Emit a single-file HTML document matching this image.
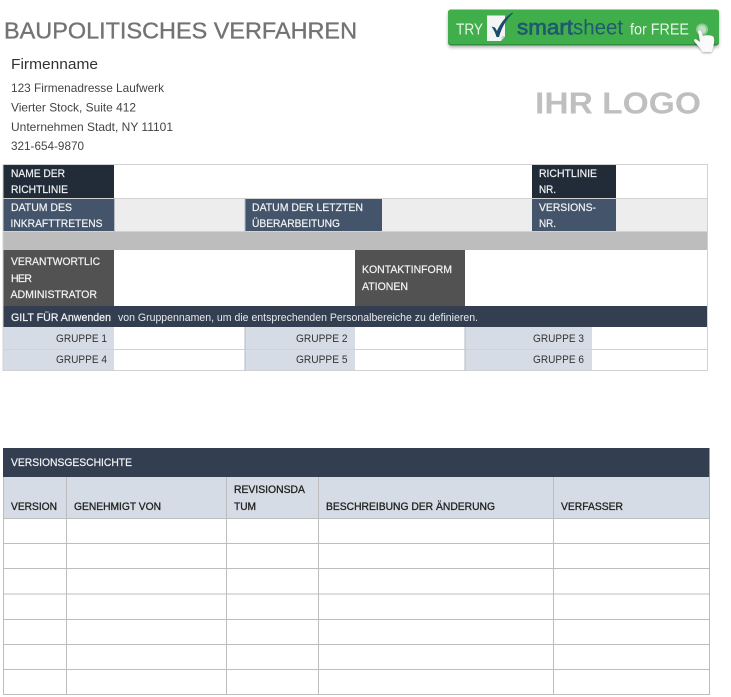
<!DOCTYPE html>
<html lang="de">
<head>
<meta charset="utf-8">
<title>Baupolitisches Verfahren</title>
<style>
html,body{margin:0;padding:0;background:#fff;width:731px;height:697px;overflow:hidden}
svg{display:block;position:absolute;left:0;top:0;filter:blur(.3px)}
text{font-family:"Liberation Sans",sans-serif;white-space:pre}
.l{font-size:10.7px;fill:#f2f4f6;stroke:#f2f4f6;stroke-width:.2}
.d{font-size:10.7px;fill:#222;stroke:#222;stroke-width:.3}
.g{font-size:11px;fill:#333}
.a{font-size:12px;fill:#444}
</style>
</head>
<body>
<svg width="731" height="697" viewBox="0 0 731 697" xmlns="http://www.w3.org/2000/svg">
<defs>
<filter id="sh" x="-5%" y="-20%" width="110%" height="150%"><feDropShadow dx="0" dy="2" stdDeviation="1.5" flood-color="#000" flood-opacity=".3"/></filter>
<filter id="hs" x="-30%" y="-30%" width="160%" height="160%"><feDropShadow dx="0" dy="1" stdDeviation="1" flood-color="#000" flood-opacity=".35"/></filter>
</defs>

<text x="4" y="38.500" font-size="23.500" fill="#737373" stroke="#737373" stroke-width=".35" textLength="353" lengthAdjust="spacingAndGlyphs">BAUPOLITISCHES VERFAHREN</text>
<text x="11" y="69" font-size="15" fill="#333" textLength="87" lengthAdjust="spacingAndGlyphs">Firmenname</text>
<text class="a" x="11" y="92" textLength="153" lengthAdjust="spacingAndGlyphs">123 Firmenadresse Laufwerk</text>
<text class="a" x="11" y="111.500" textLength="125" lengthAdjust="spacingAndGlyphs">Vierter Stock, Suite 412</text>
<text class="a" x="11" y="131" textLength="162" lengthAdjust="spacingAndGlyphs">Unternehmen Stadt, NY 11101</text>
<text class="a" x="11" y="150" textLength="73" lengthAdjust="spacingAndGlyphs">321-654-9870</text>
<text x="535" y="113.500" font-size="31" font-weight="700" fill="#bfbfbf" textLength="166" lengthAdjust="spacingAndGlyphs">IHR LOGO</text>

<!-- button -->
<rect x="448" y="9.500" width="271" height="36" rx="3" fill="#2f8f3c" filter="url(#sh)"/>
<rect x="448" y="9.500" width="271" height="34.500" rx="3" fill="#40ae4b"/>
<text x="456" y="34.500" font-size="16" fill="#e8f5e9" textLength="27" lengthAdjust="spacingAndGlyphs">TRY</text>
<path d="M487 15.500h18v21l-4 4.500h-14z" fill="#f3f5f5"/>
<path d="M501 41l1-5h3z" fill="#c9cfcf"/>
<path d="M491.500 26.500l3.500 1 2 3.500c3-7 8-14 15.500-18.500l.5.800c-6 5.200-11 13-14 23.700h-2.500c-1-4-3-7.500-5-10.500z" fill="#1e4a6e"/>
<text x="517" y="34.500" font-size="21" fill="#1f5a6e" stroke="#1f5a6e" stroke-width=".7" textLength="56" lengthAdjust="spacingAndGlyphs">smart</text>
<text x="573" y="34.500" font-size="21" fill="#1f5a6e" textLength="50" lengthAdjust="spacingAndGlyphs">sheet</text>
<text x="630" y="34.500" font-size="15.500" fill="#e8f5e9" textLength="59" lengthAdjust="spacingAndGlyphs">for FREE</text>
<circle cx="702" cy="29.500" r="5" fill="#bfe0c2" stroke="#8fca96" stroke-width="2"/>
<path d="M698 31c1.500-1 3-.5 3.500 1l1.500 4c2.500-1 8-1 10 .5 1.500 1 1.500 5 .5 9-.5 3-1.500 5-2 6.500h-9c-1-3-5-6.500-8-10.500-1-1.500 0-3 2-2l3.500 2.500z" fill="#fafafa" filter="url(#hs)"/>

<!-- policy table -->
<rect x="3" y="164" width="705" height="207" fill="#fff"/>
<rect x="3" y="164" width="111" height="34" fill="#222c38"/>
<rect x="532" y="164" width="84" height="34" fill="#222c38"/>
<rect x="3" y="198" width="705" height="34" fill="#ededed"/>
<rect x="3" y="198" width="111" height="34" fill="#44546a"/>
<rect x="245" y="198" width="137" height="34" fill="#44546a"/>
<rect x="532" y="198" width="84" height="34" fill="#44546a"/>
<rect x="3" y="232" width="705" height="18" fill="#bdbdbd"/>
<rect x="3" y="250" width="111" height="56" fill="#525252"/>
<rect x="355" y="250" width="110" height="56" fill="#525252"/>
<rect x="3" y="306" width="705" height="21" fill="#333f50"/>
<rect x="3" y="327" width="111" height="44" fill="#d6dce5"/>
<rect x="245" y="327" width="110" height="44" fill="#d6dce5"/>
<rect x="465" y="327" width="127" height="44" fill="#d6dce5"/>
<g stroke="#d2d2d2" stroke-width="1" fill="none">
<path d="M3 164.500H707.500V370.500H3V164.500"/>
<path d="M3 198.500H707.500M3 231.500H707.500M3 349.500H707.500"/>
</g>
<path d="M114.500 198V232M245 198V232M245 327V371M465 327V371" stroke="#b5bcc7" fill="none"/>

<text class="l" x="11" y="177" textLength="54" lengthAdjust="spacingAndGlyphs">NAME DER</text>
<text class="l" x="11" y="193" textLength="57" lengthAdjust="spacingAndGlyphs">RICHTLINIE</text>
<text class="l" x="11" y="211" textLength="61" lengthAdjust="spacingAndGlyphs">DATUM DES</text>
<text class="l" x="10.500" y="227" textLength="92" lengthAdjust="spacingAndGlyphs">INKRAFTTRETENS</text>
<text class="l" x="252" y="211" textLength="111" lengthAdjust="spacingAndGlyphs">DATUM DER LETZTEN</text>
<text class="l" x="252" y="227" textLength="88" lengthAdjust="spacingAndGlyphs">ÜBERARBEITUNG</text>
<text class="l" x="539" y="177" textLength="58" lengthAdjust="spacingAndGlyphs">RICHTLINIE</text>
<text class="l" x="539" y="193" textLength="17" lengthAdjust="spacingAndGlyphs">NR.</text>
<text class="l" x="539" y="211" textLength="57" lengthAdjust="spacingAndGlyphs">VERSIONS-</text>
<text class="l" x="539" y="227" textLength="17" lengthAdjust="spacingAndGlyphs">NR.</text>
<text class="l" x="11" y="265" textLength="89" lengthAdjust="spacingAndGlyphs">VERANTWORTLIC</text>
<text class="l" x="11" y="282" textLength="21" lengthAdjust="spacing">HER</text>
<text class="l" x="10.500" y="298" textLength="86.500" lengthAdjust="spacingAndGlyphs">ADMINISTRATOR</text>
<text class="l" x="362" y="273" textLength="90" lengthAdjust="spacingAndGlyphs">KONTAKTINFORM</text>
<text class="l" x="362" y="290" textLength="46" lengthAdjust="spacingAndGlyphs">ATIONEN</text>
<text class="l" x="11" y="321" stroke-width=".35" textLength="100" lengthAdjust="spacingAndGlyphs">GILT FÜR Anwenden</text>
<text x="118" y="321" font-size="11" fill="#e6e9ed" textLength="360" lengthAdjust="spacingAndGlyphs">von Gruppennamen, um die entsprechenden Personalbereiche zu definieren.</text>
<text class="g" x="56" y="342" textLength="51" lengthAdjust="spacingAndGlyphs">GRUPPE 1</text>
<text class="g" x="56" y="363" textLength="51" lengthAdjust="spacingAndGlyphs">GRUPPE 4</text>
<text class="g" x="296" y="342" textLength="51.500" lengthAdjust="spacingAndGlyphs">GRUPPE 2</text>
<text class="g" x="296" y="363" textLength="51.500" lengthAdjust="spacingAndGlyphs">GRUPPE 5</text>
<text class="g" x="533" y="342" textLength="51" lengthAdjust="spacingAndGlyphs">GRUPPE 3</text>
<text class="g" x="533" y="363" textLength="51" lengthAdjust="spacingAndGlyphs">GRUPPE 6</text>

<!-- version table -->
<rect x="3" y="448" width="706.500" height="29" fill="#333f50"/>
<rect x="3" y="477" width="706.500" height="42" fill="#d6dce5"/>
<g stroke="#bdbdbd" stroke-width="1" fill="none">
<path d="M3.500 477V694.500M66.500 477V694.500M226.500 477V694.500M318.500 477V694.500M553.500 477V694.500M709.500 477V695"/>
<path d="M3 518.500H710M3 543.500H710M3 568.500H710M3 594H710M3 619.500H710M3 644.500H710M3 669.500H710M3 694.500H710"/>
</g>
<text class="l" x="11" y="466" textLength="121" lengthAdjust="spacingAndGlyphs">VERSIONSGESCHICHTE</text>
<text class="d" x="11" y="510" textLength="46" lengthAdjust="spacingAndGlyphs">VERSION</text>
<text class="d" x="74" y="510" textLength="87" lengthAdjust="spacingAndGlyphs">GENEHMIGT VON</text>
<text class="d" x="234" y="493" textLength="71" lengthAdjust="spacingAndGlyphs">REVISIONSDA</text>
<text class="d" x="234" y="510" textLength="22" lengthAdjust="spacingAndGlyphs">TUM</text>
<text class="d" x="326" y="510" textLength="169" lengthAdjust="spacingAndGlyphs">BESCHREIBUNG DER ÄNDERUNG</text>
<text class="d" x="561" y="510" textLength="62" lengthAdjust="spacingAndGlyphs">VERFASSER</text>
</svg>
</body>
</html>
